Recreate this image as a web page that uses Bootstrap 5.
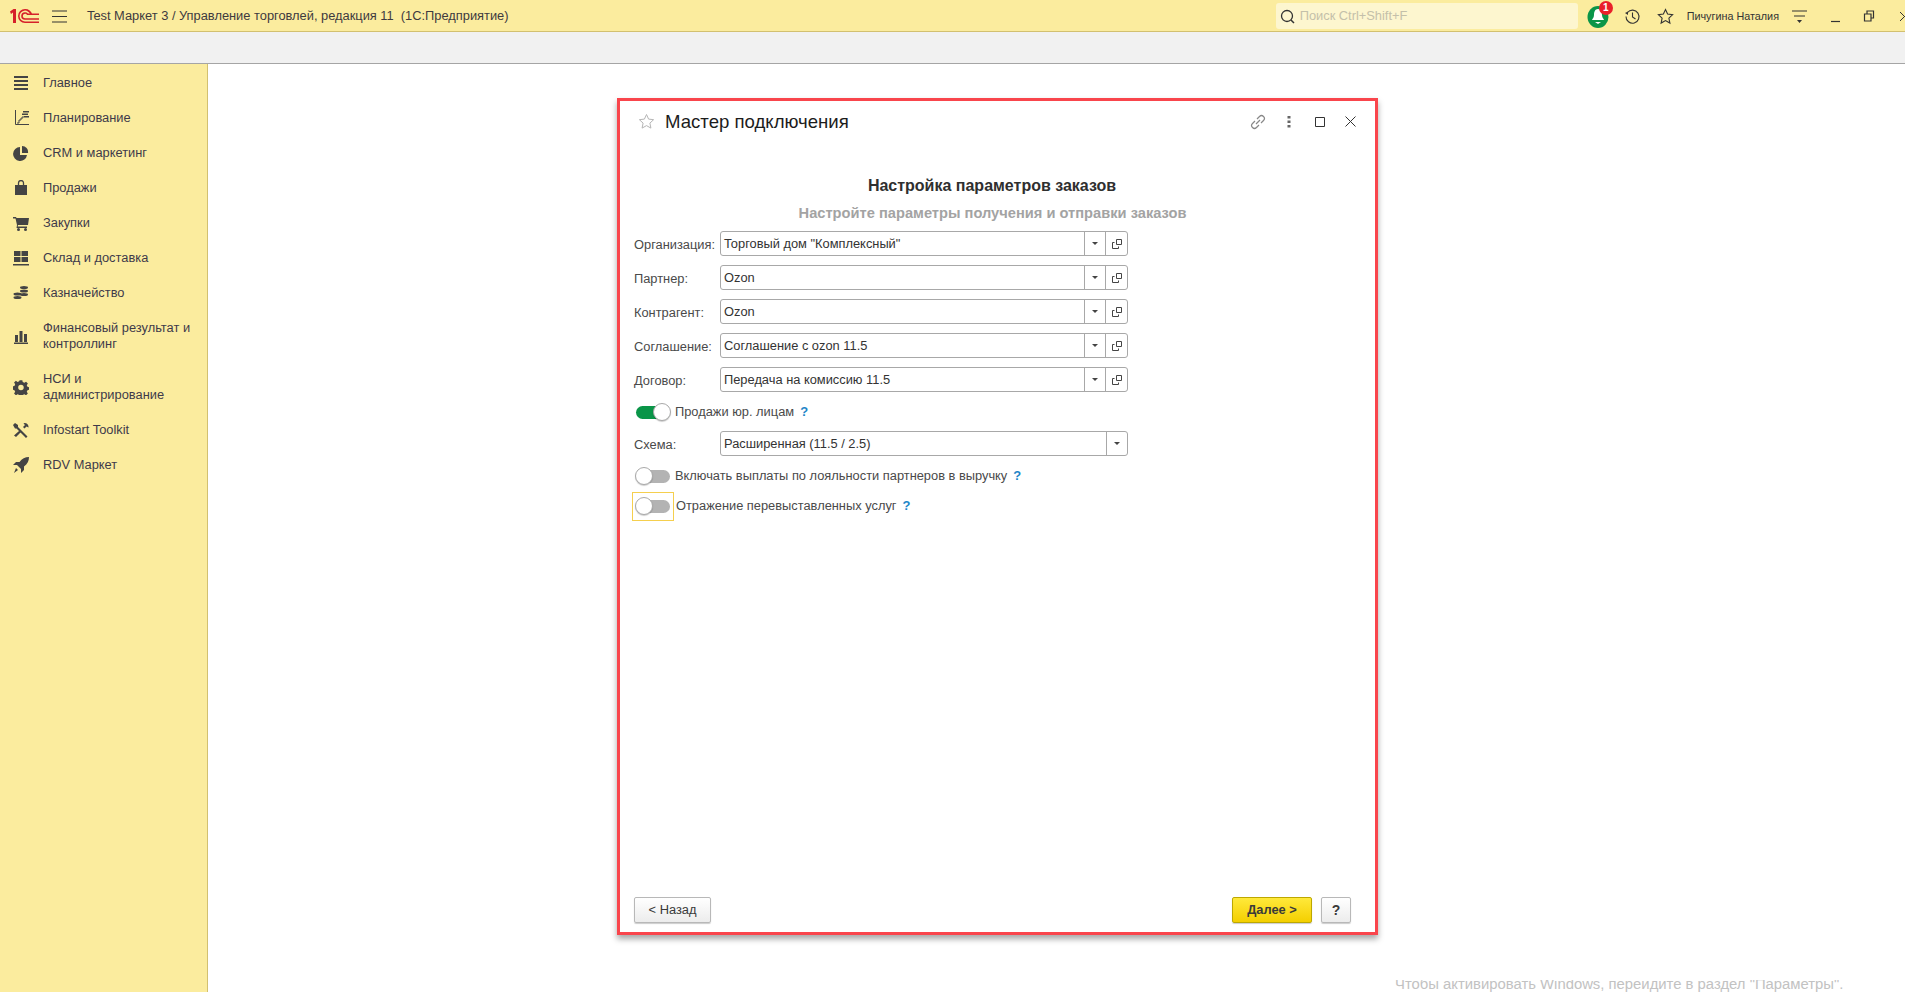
<!doctype html>
<html lang="ru"><head><meta charset="utf-8"><title>Мастер подключения</title>
<link href="https://cdn.jsdelivr.net/npm/bootstrap@5.3.0/dist/css/bootstrap.min.css" rel="stylesheet">
<style>
html,body{height:100%;overflow:hidden}
body{font-family:"Liberation Sans",Arial,sans-serif;font-size:12.85px;color:#333;background:#fff}
.shell{height:992px;width:1905px;overflow:hidden}
.topbar{height:32px;background:#fbec9e;border-bottom:1px solid #d2c070;padding-top:1px}
.logo1c{width:30px;height:16px;margin-left:9px;flex:none}
.burger{margin-left:13px;margin-right:20px;flex:none}
.apptitle{color:#3e3a3e;white-space:pre}
.topright{flex:none}
.searchbox{width:302px;height:26px;background:#fdf6cf;border-radius:3px;margin-right:9px;padding-left:3px;color:#c4c0aa}
.searchbox svg{margin-right:4px}
.notif{width:22px;height:24px;margin-right:15px}
.notif-bubble{position:absolute;top:-3px;right:-4px;width:14px;height:14px;border-radius:50%;background:#e9202a;color:#fff;font-size:10px;font-weight:700;line-height:14px;text-align:center}
.username{font-size:10.8px;margin-left:13px;margin-right:13px;color:#333}
.win-x{margin-left:24px;margin-right:-5px}
.win-r{margin-left:22px}
.toolstrip{height:32px;background:#f1f1f1;border-bottom:1px solid #a5a5a5}
.mainzone{height:928px}
.sidenav{width:208px;background:#fbec9e;border-right:1px solid #d2c070;padding-top:1px}
.navitem{min-height:35px;padding-left:13px;color:#3e3a4a;line-height:16px}
.navitem.dbl{min-height:51px}
.navicon{width:16px;height:16px;margin-right:14px;flex:none;fill:#444}
.workspace{background:#fff}
.wizard{position:absolute;left:409px;top:34px;width:761px;height:837px;border:3px solid #f9454c;box-shadow:0 4px 6px rgba(0,0,0,.35);padding:0 13px 0 14px}
.wizhead{height:39px;padding-top:2px;padding-left:4px}
.wiztitle{font-size:18.6px;color:#1c1c1c;margin-left:10px}
.wiztools{margin-left:auto;margin-right:-4px}
.toolcell{width:31px}
.h-main{font-size:16px;font-weight:700;color:#2f2f2f;text-align:center;margin-top:36px;height:27px;line-height:20px;padding-right:12px}
.h-sub{font-size:14.67px;font-weight:700;color:#a3a3a3;text-align:center;height:24px;line-height:20px;padding-right:11px}
.frow{height:34px;padding-top:4px}
.flabel{width:86px;flex:none;color:#4a4a4a}
.fieldbox{width:408px;height:25px;border:1px solid #a8a8a8;border-radius:3px;background:#fff}
.fieldval{flex:1;padding-left:3px;color:#333;line-height:23px}
.fbtn{width:21px;border-left:1px solid #a8a8a8;flex:none}
.fbtn2{width:22px}
.caret-d{width:0;height:0;border-left:3px solid transparent;border-right:3px solid transparent;border-top:3px solid #444}
.swrow{height:30px}
.swtrack{width:34px;height:13px;border-radius:7px;background:#b3b3b3;flex:none;margin-left:2px}
.swtrack.on{background:#0a9548}
.swknob{position:absolute;top:-3px;left:-1px;width:18px;height:18px;border-radius:50%;background:#fff;border:1px solid #a9a9a9;box-shadow:0 1px 1px rgba(0,0,0,.2)}
.swtrack.on .swknob{left:auto;right:-1px}
.swwrap{width:36px;height:26px;flex:none}
.swfocus{width:42px;height:29px;border:1px solid #f5cf4e;margin-left:-2px;flex:none}
.swfocus .swtrack{margin-left:3px}
.swtext{margin-left:5px;color:#4a4a4a}
.swfocus + .swtext{margin-left:2px}
.qmark{color:#1d86c8;font-weight:700;margin-left:6px;font-size:13px}
.wizfoot{position:absolute;left:14px;right:24px;bottom:9px}
.btn-back,.btn-next,.btn-help{height:26px;border-radius:2px;padding:0;line-height:24px;color:#3a3a3a}
.btn-back{width:77px;border:1px solid #b8b8b8;background:linear-gradient(#fff,#ececec);box-shadow:0 1px 1px rgba(0,0,0,.2)}
.btn-next{width:80px;border:1px solid #bda800;background:linear-gradient(#ffe93b,#f4cf00);font-weight:700;box-shadow:0 1px 1px rgba(0,0,0,.2)}
.btn-help{width:30px;border:1px solid #b8b8b8;background:linear-gradient(#fff,#ececec);font-weight:700;font-size:14px;margin-left:9px;box-shadow:0 1px 1px rgba(0,0,0,.2)}
.watermark{position:absolute;left:1395px;top:980px;height:12px;overflow:hidden;color:#c2c2c2;font-size:14.85px;white-space:nowrap}
.watermark span{display:block;line-height:20px;margin-top:-6px}
</style></head><body>
<div class="shell d-flex flex-column position-relative">
<header class="topbar d-flex align-items-center">
<svg class="logo1c" viewBox="0 0 30 16"><path d="M1 3.500L4.500 1H7v14H4V4.500L2 6z" fill="#d6212a"/><path d="M16 1a7 7 0 1 0 0 14h14v-1.600H16a5.400 5.400 0 1 1 5.200-6.800h2A7 7 0 0 0 16 1z" fill="#d6212a"/><path d="M16 4.200a3.800 3.800 0 1 0 0 7.600h14v-1.600H16a2.200 2.200 0 1 1 2-3.100h12V5.500H19a3.800 3.800 0 0 0-3-1.300z" fill="#d6212a"/></svg>
<svg class="burger" width="15" height="13" viewBox="0 0 15 13"><path d="M0 1h15M0 6.500h15M0 12h15" stroke="#333" stroke-width="1"/></svg>
<span class="apptitle">Test Маркет 3 / Управление торговлей, редакция 11  (1С:Предприятие)</span>
<div class="topright ms-auto d-flex align-items-center">
<div class="searchbox d-flex align-items-center"><svg width="17" height="17" viewBox="0 0 17 17"><circle cx="8" cy="8" r="5.500" fill="none" stroke="#333" stroke-width="1.300"/><path d="M12 12l3 3" stroke="#333" stroke-width="1.500"/></svg><span>Поиск Ctrl+Shift+F</span></div>
<div class="notif position-relative"><svg width="22" height="24" viewBox="0 0 22 24"><ellipse cx="11" cy="13" rx="10.500" ry="11" fill="#0a9548"/><path d="M11 5c-3 0-4 3-4 6 0 3-2 4-2 5h12c0-1-2-2-2-5 0-3-1-6-4-6z" fill="#fff"/><path d="M8 18h6l-3 2z" fill="#fff"/></svg><span class="notif-bubble">1</span></div>
<svg width="17" height="17" viewBox="0 0 17 17" class="me-3"><path d="M3.500 4.500A6.500 6.500 0 1 1 2 8.500" fill="none" stroke="#333" stroke-width="1.100"/><path d="M1 5l3-1.500V7z" fill="#333"/><path d="M8.500 4.500v4.500l3 2" fill="none" stroke="#333" stroke-width="1.100"/></svg>
<svg width="17" height="17" viewBox="0 0 17 17"><path d="M8.500 1.500l2.100 4.600 5 .6-3.700 3.400 1 5-4.400-2.500-4.400 2.500 1-5L1.400 6.700l5-.6z" fill="none" stroke="#333" stroke-width="1.100"/></svg>
<span class="username">Пичугина Наталия</span>
<svg width="15" height="15" viewBox="0 0 15 15" class="me-3"><path d="M0 2h15M2 7h11" stroke="#333" stroke-width="1.100"/><path d="M5 11h5l-2.500 3z" fill="#333"/></svg>
<svg width="10" height="14" viewBox="0 0 10 14" class="ms-2"><path d="M0 12.500h9" stroke="#333" stroke-width="1.200"/></svg>
<svg class="win-r" width="12" height="12" viewBox="0 0 12 12"><path d="M1.500 4h6.500v7H1.500zM4 4V1h6.500v7H8" fill="none" stroke="#333" stroke-width="1.200"/></svg>
<svg class="win-x" width="11" height="11" viewBox="0 0 11 11"><path d="M1 1l9 9M10 1l-9 9" stroke="#333" stroke-width="1"/></svg>
</div>
</header>
<div class="toolstrip"></div>
<div class="mainzone d-flex">
<nav class="sidenav d-flex flex-column">
<div class="navitem d-flex align-items-center"><svg class="navicon" viewBox="0 0 16 16"><path d="M1 1h14v2H1zM1 5h14v2H1zM1 9h14v2H1zM1 13h14v2H1z"/></svg>Главное</div>
<div class="navitem d-flex align-items-center"><svg class="navicon" viewBox="0 0 16 16"><path d="M2.500 0v14.500H16" fill="none" stroke="#444"/><path d="M4 13h2v-3h2V8h2V6" fill="none" stroke="#444"/><path d="M10 1h6v1.500h-6zM9 3.500h6V5H9zM11 6h5v1.500h-5z"/></svg>Планирование</div>
<div class="navitem d-flex align-items-center"><svg class="navicon" viewBox="0 0 16 16"><path d="M7 2a7 7 0 1 0 7 8H7z"/><path d="M9 1a6 6 0 0 1 6 7H9z"/></svg>CRM и маркетинг</div>
<div class="navitem d-flex align-items-center"><svg class="navicon" viewBox="0 0 16 16"><path d="M2 5h12v10H2z"/><path d="M5.500 6V3a2.500 2.500 0 0 1 5 0v3" fill="none" stroke="#444" stroke-width="1.300"/></svg>Продажи</div>
<div class="navitem d-flex align-items-center"><svg class="navicon" viewBox="0 0 16 16"><path d="M0 2h3l.5 1H16l-1 7H5l-.3 1.500H14V13H3.500L4 10 2.500 3.500H0z"/><circle cx="5.500" cy="14.500" r="1.500"/><circle cx="12.500" cy="14.500" r="1.500"/></svg>Закупки</div>
<div class="navitem d-flex align-items-center"><svg class="navicon" viewBox="0 0 16 16"><path d="M1 1h6.500v5H1zM8.500 1H15v5H8.500zM1 7h6.500v5H1zM8.500 7H15v5H8.500zM0 14h16v1.500H0z"/></svg>Склад и доставка</div>
<div class="navitem d-flex align-items-center"><svg class="navicon" viewBox="0 0 16 16"><ellipse cx="11" cy="2.500" rx="4" ry="1.500"/><ellipse cx="11" cy="6" rx="4" ry="1.500"/><ellipse cx="11" cy="9.500" rx="4" ry="1.500"/><ellipse cx="4.500" cy="9" rx="4" ry="1.500"/><ellipse cx="4.500" cy="12.500" rx="4" ry="1.500"/></svg>Казначейство</div>
<div class="navitem dbl d-flex align-items-center"><svg class="navicon" viewBox="0 0 16 16"><path d="M2 7h3v7H2zM6.500 3h3v11h-3zM11 6h3v8h-3zM1 14.500h14V16H1z"/></svg><span>Финансовый результат и<br>контроллинг</span></div>
<div class="navitem dbl d-flex align-items-center"><svg class="navicon" viewBox="0 0 16 16"><path fill-rule="evenodd" d="M6.500 1h3l.4 2 1.800.8 1.800-1.200 2 2-1.200 1.800.8 1.800 2 .4v2.800l-2 .4-.8 1.800 1.200 1.800-2 2-1.800-1.200-1.800.8-.4 2h-3l-.4-2-1.800-.8-1.800 1.200-2-2 1.200-1.800-.8-1.800-2-.4V7.600l2-.4.8-1.800-1.200-1.800 2-2 1.800 1.200 1.800-.8zM8 6a3 3 0 1 0 0 6 3 3 0 0 0 0-6z" transform="translate(.6 .3) scale(.92)"/></svg><span>НСИ и<br>администрирование</span></div>
<div class="navitem d-flex align-items-center"><svg class="navicon" viewBox="0 0 16 16"><path d="M2 1l3 2v2l8 8 1.500 1.500-1.500 1.500-1.500-1.500-8-8H2L0 3zM11.500 1a4 4 0 0 1 4 4.500l-2-1-2 2-1.500-1.500 2-2-1.500-1.500zM6 9l1.500 1.500L3 15l-2-1.500z"/></svg>Infostart Toolkit</div>
<div class="navitem d-flex align-items-center"><svg class="navicon" viewBox="0 0 16 16"><path d="M16 0c-4 0-7 1.500-9.500 5H3L0 8h4l4 4v4l3-3V9.500C14.500 7 16 4 16 0zM3 11l2 2-4 3z"/></svg>RDV Маркет</div>
</nav>
<main class="workspace flex-grow-1 position-relative">
<section class="wizard bg-white">
<div class="wizhead d-flex align-items-center">
<svg width="17" height="17" viewBox="0 0 17 17"><path d="M8.500 1.500l2.100 4.600 5 .6-3.700 3.400 1 5-4.400-2.500-4.400 2.500 1-5L1.400 6.700l5-.6z" fill="none" stroke="#b5b5b5"/></svg>
<span class="wiztitle">Мастер подключения</span>
<div class="wiztools d-flex align-items-center">
<span class="toolcell d-flex justify-content-center"><svg width="18" height="16" viewBox="0 0 18 16"><path d="M7 10l4-4M6 7L3.500 9.500a2.800 2.800 0 0 0 4 4L10 11M8 5l2.500-2.500a2.800 2.800 0 0 1 4 4L12 9" fill="none" stroke="#888" stroke-width="1.200"/></svg></span>
<span class="toolcell d-flex justify-content-center"><svg width="4" height="12" viewBox="0 0 4 12"><path d="M.5 0h3v2.500h-3zM.5 4.500h3V7h-3zM.5 9h3v2.500h-3z" fill="#666"/></svg></span>
<span class="toolcell d-flex justify-content-center"><svg width="10" height="10" viewBox="0 0 10 10"><path d="M.5.500h9v9h-9z" fill="none" stroke="#333"/></svg></span>
<span class="toolcell d-flex justify-content-center"><svg width="11" height="11" viewBox="0 0 11 11"><path d="M.5.500l10 10M10.500.500l-10 10" stroke="#333"/></svg></span>
</div></div>
<div class="h-main">Настройка параметров заказов</div>
<div class="h-sub">Настройте параметры получения и отправки заказов</div>
<div class="frow d-flex"><span class="flabel pt-1">Организация:</span><div class="fieldbox d-flex"><span class="fieldval">Торговый дом "Комплексный"</span><span class="fbtn d-flex align-items-center justify-content-center"><i class="caret-d"></i></span><span class="fbtn fbtn2 d-flex align-items-center justify-content-center"><svg width="10" height="10" viewBox="0 0 10 10"><path d="M4.500.500h5v5h-5zM.5 3.500h2M.5 3.500v6h6V7.500" fill="none" stroke="#444"/></svg></span></div></div>
<div class="frow d-flex"><span class="flabel pt-1">Партнер:</span><div class="fieldbox d-flex"><span class="fieldval">Ozon</span><span class="fbtn d-flex align-items-center justify-content-center"><i class="caret-d"></i></span><span class="fbtn fbtn2 d-flex align-items-center justify-content-center"><svg width="10" height="10" viewBox="0 0 10 10"><path d="M4.500.500h5v5h-5zM.5 3.500h2M.5 3.500v6h6V7.500" fill="none" stroke="#444"/></svg></span></div></div>
<div class="frow d-flex"><span class="flabel pt-1">Контрагент:</span><div class="fieldbox d-flex"><span class="fieldval">Ozon</span><span class="fbtn d-flex align-items-center justify-content-center"><i class="caret-d"></i></span><span class="fbtn fbtn2 d-flex align-items-center justify-content-center"><svg width="10" height="10" viewBox="0 0 10 10"><path d="M4.500.500h5v5h-5zM.5 3.500h2M.5 3.500v6h6V7.500" fill="none" stroke="#444"/></svg></span></div></div>
<div class="frow d-flex"><span class="flabel pt-1">Соглашение:</span><div class="fieldbox d-flex"><span class="fieldval">Соглашение с ozon 11.5</span><span class="fbtn d-flex align-items-center justify-content-center"><i class="caret-d"></i></span><span class="fbtn fbtn2 d-flex align-items-center justify-content-center"><svg width="10" height="10" viewBox="0 0 10 10"><path d="M4.500.500h5v5h-5zM.5 3.500h2M.5 3.500v6h6V7.500" fill="none" stroke="#444"/></svg></span></div></div>
<div class="frow d-flex"><span class="flabel pt-1">Договор:</span><div class="fieldbox d-flex"><span class="fieldval">Передача на комиссию 11.5</span><span class="fbtn d-flex align-items-center justify-content-center"><i class="caret-d"></i></span><span class="fbtn fbtn2 d-flex align-items-center justify-content-center"><svg width="10" height="10" viewBox="0 0 10 10"><path d="M4.500.500h5v5h-5zM.5 3.500h2M.5 3.500v6h6V7.500" fill="none" stroke="#444"/></svg></span></div></div>
<div class="swrow d-flex align-items-center"><div class="swwrap d-flex align-items-center"><div class="swtrack on position-relative"><div class="swknob"></div></div></div><span class="swtext">Продажи юр. лицам</span><span class="qmark">?</span></div>
<div class="frow d-flex"><span class="flabel pt-1">Схема:</span><div class="fieldbox d-flex"><span class="fieldval">Расширенная (11.5 / 2.5)</span><span class="fbtn d-flex align-items-center justify-content-center"><i class="caret-d"></i></span></div></div>
<div class="swrow d-flex align-items-center"><div class="swwrap d-flex align-items-center"><div class="swtrack position-relative"><div class="swknob"></div></div></div><span class="swtext">Включать выплаты по лояльности партнеров в выручку</span><span class="qmark">?</span></div>
<div class="swrow d-flex align-items-center"><div class="swfocus d-flex align-items-center"><div class="swtrack position-relative"><div class="swknob"></div></div></div><span class="swtext">Отражение перевыставленных услуг</span><span class="qmark">?</span></div>
<div class="wizfoot d-flex"><button class="btn-back">&lt; Назад</button><button class="btn-next ms-auto">Далее &gt;</button><button class="btn-help">?</button></div>
</section>
</main>
</div>
<div class="watermark"><span>Чтобы активировать Windows, перейдите в раздел "Параметры".</span></div>
</div>
</body></html>
